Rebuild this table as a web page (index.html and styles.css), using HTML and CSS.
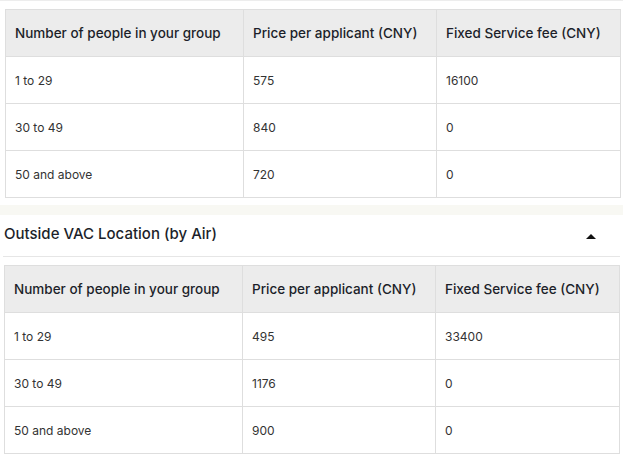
FILE: index.html
```html
<!DOCTYPE html>
<html>
<head>
<meta charset="utf-8">
<link rel="stylesheet" href="styles.css">
</head>
<body>
<div class="topline"></div>
<div class="section first">
  <table class="fees">
    <colgroup><col class="c1"><col class="c2"><col class="c3"></colgroup>
    <thead>
      <tr><th>Number of people in your group</th><th>Price per applicant (CNY)</th><th>Fixed Service fee (CNY)</th></tr>
    </thead>
    <tbody>
      <tr><td>1 to 29</td><td>575</td><td>16100</td></tr>
      <tr><td>30 to 49</td><td>840</td><td>0</td></tr>
      <tr><td>50 and above</td><td>720</td><td>0</td></tr>
    </tbody>
  </table>
</div>
<div class="band"></div>
<div class="accordion">
  <div class="acc-head">
    <span class="acc-title">Outside VAC Location (by Air)</span>
    <span class="caret"></span>
  </div>
  <table class="fees">
    <colgroup><col class="c1"><col class="c2"><col class="c3"></colgroup>
    <thead>
      <tr><th>Number of people in your group</th><th>Price per applicant (CNY)</th><th>Fixed Service fee (CNY)</th></tr>
    </thead>
    <tbody>
      <tr><td>1 to 29</td><td>495</td><td>33400</td></tr>
      <tr><td>30 to 49</td><td>1176</td><td>0</td></tr>
      <tr><td>50 and above</td><td>900</td><td>0</td></tr>
    </tbody>
  </table>
</div>
</body>
</html>
```
FILE: styles.css
```css
html, body {
  margin: 0;
  padding: 0;
  background: #ffffff;
  font-family: Inter, "Noto Sans", sans-serif;
}
.topline {
  height: 1px;
  background: #ededed;
}
.section.first {
  padding: 8px 3px 0 5px;
}
.fees {
  border-collapse: collapse;
  width: 615px;
  table-layout: fixed;
}
.fees col.c1 { width: 238px; }
.fees col.c2 { width: 193px; }
.fees col.c3 { width: 184px; }
.fees th, .fees td {
  border: 1px solid #dedede;
  padding: 0 9px;
  height: 47px;
  text-align: left;
  vertical-align: middle;
  box-sizing: border-box;
}
.fees th {
  background: #ececec;
  font-size: 13.5px;
  font-weight: 500;
  color: #1c1f2a;
}
.fees td {
  font-size: 12px;
  font-weight: 400;
  color: #333333;
}
.band {
  margin-top: 7px;
  height: 10px;
  background: #f8f8f3;
}
.accordion {
  padding: 0 3px 0 3px;
}
.acc-head {
  display: flex;
  align-items: center;
  justify-content: space-between;
  height: 41px;
  border-bottom: 1px solid #e6e6e6;
  padding: 0 24px 0 1px;
  margin-bottom: 8px;
}
.acc-title {
  font-size: 15px;
  font-weight: 500;
  color: #1c1f2a;
  margin-top: -5px;
}
.caret {
  width: 0;
  height: 0;
  border-left: 5px solid transparent;
  border-right: 5px solid transparent;
  border-bottom: 5px solid #111;
  margin-top: 2px;
}
.accordion .fees {
  margin-left: 1px;
}
```
